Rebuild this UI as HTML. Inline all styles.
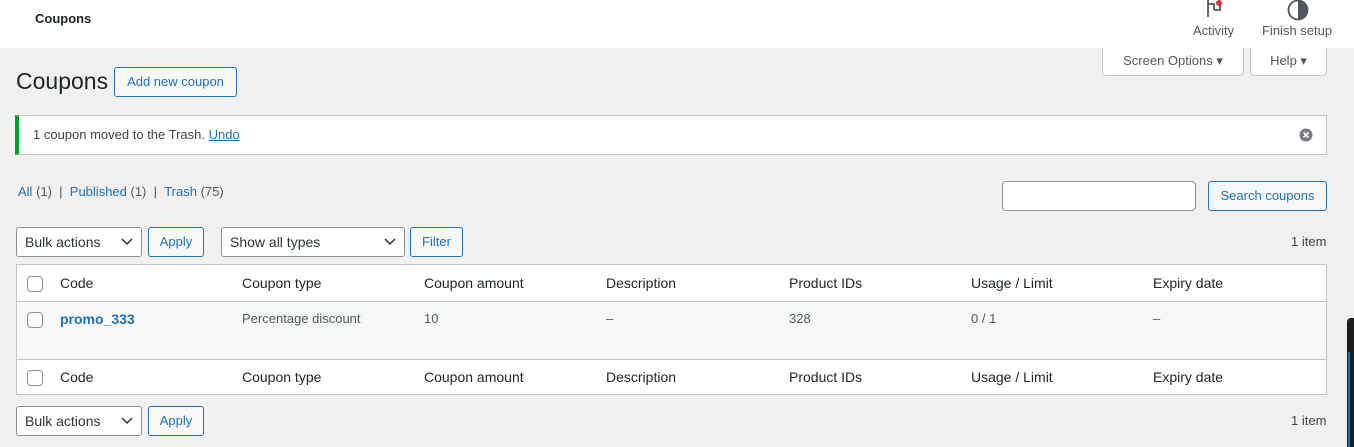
<!DOCTYPE html>
<html><head><style>
body{margin:0;width:1354px;height:447px;overflow:hidden;background:#f0f0f1;font-family:"Liberation Sans",sans-serif;font-size:13px;color:#3c434a;position:relative}
.a{position:absolute}
.hdr{left:0;top:0;width:1354px;height:48px;background:#fff}
a{color:#2271b1;text-decoration:none}
.btn{position:absolute;border:1px solid #2271b1;color:#2271b1;background:#f6f7f7;border-radius:3px;box-sizing:border-box;text-align:center;font-size:13px}
.sel{position:absolute;border:1px solid #8c8f94;background:#fff;border-radius:3px;box-sizing:border-box;font-size:14px;color:#2c3338;padding-left:8px;line-height:28px}
.sel svg{position:absolute;right:8px;top:10px}
.tbl{left:16px;width:1311px;border:1px solid #c3c4c7;box-sizing:border-box;background:#fff}
.cb{position:absolute;width:16px;height:16px;border:1px solid #8c8f94;border-radius:4px;box-sizing:border-box;background:#fff}
.th{position:absolute;font-size:14px;color:#1d2327}
</style></head><body>
<div class="a hdr"></div>
<div class="a" style="left:35px;top:11px;font-size:13px;font-weight:bold;color:#1d2327">Coupons</div>
<svg class="a" style="left:1205px;top:0" width="22" height="20" viewBox="0 0 22 20"><path d="M3 0v17M3 4h6v6M9 10h6V2" stroke="#50575e" stroke-width="1.8" fill="none"/><circle cx="14" cy="3" r="3" fill="#d63638"/></svg>
<div class="a" style="left:1193px;top:23px;font-size:13px;color:#50575e">Activity</div>
<svg class="a" style="left:1286px;top:-2px" width="24" height="24" viewBox="0 0 24 24"><circle cx="12" cy="12" r="9.5" stroke="#50575e" stroke-width="1.8" fill="none"/><path d="M12 3a9 9 0 0 1 0 18z" fill="#50575e"/></svg>
<div class="a" style="left:1262px;top:23px;font-size:13px;color:#50575e">Finish setup</div>
<div class="a" style="left:1102px;top:48px;width:142px;height:28px;background:#fff;border:1px solid #c3c4c7;border-top:none;border-radius:0 0 4px 4px;box-sizing:border-box;text-align:center;line-height:26px;color:#50575e">Screen Options ▾</div>
<div class="a" style="left:1250px;top:48px;width:77px;height:28px;background:#fff;border:1px solid #c3c4c7;border-top:none;border-radius:0 0 4px 4px;box-sizing:border-box;text-align:center;line-height:26px;color:#50575e">Help ▾</div>
<div class="a" style="left:16px;top:68px;font-size:23px;color:#1d2327">Coupons</div>
<div class="btn" style="left:114px;top:67px;width:123px;height:30px;line-height:28px">Add new coupon</div>
<div class="a" style="left:15px;top:115px;width:1312px;height:40px;background:#fff;border:1px solid #c3c4c7;border-left:4px solid #00a32a;box-sizing:border-box"></div>
<div class="a" style="left:33px;top:127px">1 coupon moved to the Trash. <a style="text-decoration:underline">Undo</a></div>
<svg class="a" style="left:1299px;top:128px" width="14" height="14" viewBox="0 0 14 14"><circle cx="7" cy="7" r="6.5" fill="#787c82"/><path d="M4.5 4.5l5 5M9.5 4.5l-5 5" stroke="#fff" stroke-width="1.6"/></svg>
<div class="a" style="left:18px;top:184px;color:#50575e"><a>All</a> (1) &nbsp;| &nbsp;<a>Published</a> (1) &nbsp;| &nbsp;<a>Trash</a> (75)</div>
<div class="a" style="left:1002px;top:181px;width:194px;height:30px;border:1px solid #8c8f94;border-radius:4px;background:#fff;box-sizing:border-box"></div>
<div class="btn" style="left:1208px;top:181px;width:119px;height:30px;line-height:28px">Search coupons</div>
<div class="sel" style="left:16px;top:227px;width:126px;height:30px">Bulk actions<svg width="12" height="8"><path d="M1 1l5 5 5-5" stroke="#2c3338" stroke-width="1.5" fill="none"/></svg></div>
<div class="btn" style="left:148px;top:227px;width:56px;height:30px;line-height:28px">Apply</div>
<div class="sel" style="left:221px;top:227px;width:184px;height:30px">Show all types<svg width="12" height="8"><path d="M1 1l5 5 5-5" stroke="#2c3338" stroke-width="1.5" fill="none"/></svg></div>
<div class="btn" style="left:410px;top:227px;width:53px;height:30px;line-height:28px">Filter</div>
<div class="a" style="left:1291px;top:234px">1 item</div>
<div class="a tbl" style="top:264px;height:131px"></div>
<div class="a" style="left:17px;top:301px;width:1309px;height:57px;background:#f6f7f7;border-top:1px solid #c3c4c7;border-bottom:1px solid #c3c4c7"></div>
<div class="cb" style="left:27px;top:276px"></div>
<div class="cb" style="left:27px;top:312px"></div>
<div class="cb" style="left:27px;top:370px"></div>
<div class="th" style="left:60px;top:275px">Code</div><div class="th" style="left:242px;top:275px">Coupon type</div><div class="th" style="left:424px;top:275px">Coupon amount</div><div class="th" style="left:606px;top:275px">Description</div><div class="th" style="left:789px;top:275px">Product IDs</div><div class="th" style="left:971px;top:275px">Usage / Limit</div><div class="th" style="left:1153px;top:275px">Expiry date</div>
<div class="a" style="left:60px;top:311px;font-size:14px;font-weight:bold"><a>promo_333</a></div>
<div class="a" style="left:242px;top:311px;color:#50575e">Percentage discount</div>
<div class="a" style="left:424px;top:311px;color:#50575e">10</div>
<div class="a" style="left:606px;top:311px;color:#50575e">–</div>
<div class="a" style="left:789px;top:311px;color:#50575e">328</div>
<div class="a" style="left:971px;top:311px;color:#50575e">0 / 1</div>
<div class="a" style="left:1153px;top:311px;color:#50575e">–</div>
<div class="th" style="left:60px;top:369px">Code</div><div class="th" style="left:242px;top:369px">Coupon type</div><div class="th" style="left:424px;top:369px">Coupon amount</div><div class="th" style="left:606px;top:369px">Description</div><div class="th" style="left:789px;top:369px">Product IDs</div><div class="th" style="left:971px;top:369px">Usage / Limit</div><div class="th" style="left:1153px;top:369px">Expiry date</div>
<div class="sel" style="left:16px;top:406px;width:126px;height:30px">Bulk actions<svg width="12" height="8"><path d="M1 1l5 5 5-5" stroke="#2c3338" stroke-width="1.5" fill="none"/></svg></div>
<div class="btn" style="left:148px;top:406px;width:56px;height:30px;line-height:28px">Apply</div>
<div class="a" style="left:1291px;top:413px">1 item</div>
<div class="a" style="left:1347px;top:318px;width:7px;height:129px;background:#1e1e1e;border-radius:4px 0 0 0"></div>
<div class="a" style="left:1348px;top:352px;width:2px;height:95px;background:#2271b1"></div>
</body></html>
